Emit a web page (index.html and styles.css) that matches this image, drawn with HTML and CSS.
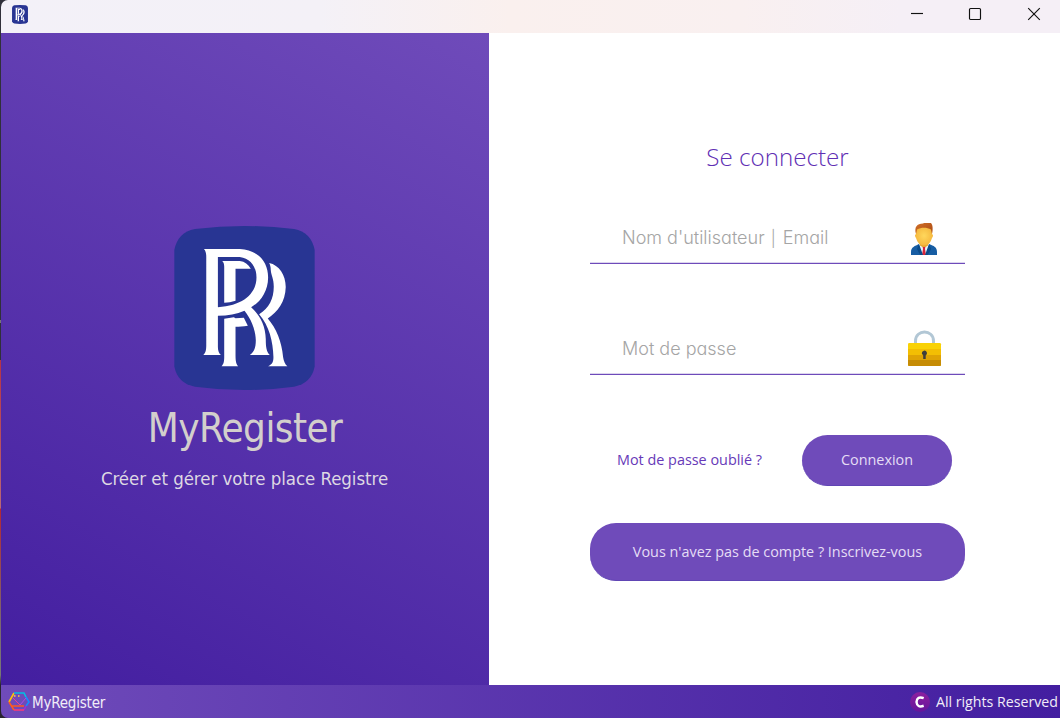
FILE: index.html
```html
<!DOCTYPE html>
<html lang="fr">
<head>
<meta charset="utf-8">
<title>MyRegister</title>
<link rel="stylesheet" href="styles.css">
</head>
<body>
<svg class="defs" aria-hidden="true">
  <symbol id="logo" viewBox="42 33 424 491" preserveAspectRatio="none">
    <path fill="#283593" d="M105 42Q254 24 403 42Q455 52 465 105V454Q455 505 403 514Q254 534 105 514Q53 505 43 454V105Q53 52 105 42Z"/>
    <g fill="#fff">
      <path fill-rule="evenodd" d="M132 102H240C295 105 325 140 325 187C325 230 300 262 274 276C300 300 317 330 318 372C318 395 320 410 330 419H270C284 410 288 395 288 375C287 340 272 310 254 287C230 297 205 302 174 302V395C174 408 178 414 183 419H130C137 413 139 405 139 390V125C139 115 137 107 132 102ZM174 126V276C250 272 290 235 290 187C290 155 272 130 240 126Z"/>
      <path d="M187 138H240C255 140 265 148 273 161H227V257C215 261 205 262 193 263V155C193 147 191 142 187 138Z"/>
      <path d="M193 311L222 306L227 309L252 308L264 332C250 334 238 335 227 335V420C227 438 229 447 235 453H185C191 446 193 440 193 425Z"/>
      <path d="M328 144C358 150 378 180 378 216C377 260 354 290 324 310C350 340 366 380 370 425C372 438 376 447 383 453H325C338 446 341 440 341 425C340 380 328 330 298 297C328 280 342 250 342 215C342 190 334 182 333 165C333 155 331 149 328 144Z"/>
    </g>
  </symbol>
</svg>
<div class="window">
  <header class="titlebar">
    <svg class="app-icon"><use href="#logo"/></svg>
    <div class="controls">
      <svg viewBox="0 0 14 14"><path d="M1 6.5H13"/></svg>
      <svg viewBox="0 0 14 14"><rect x="1.5" y="1.5" width="11" height="11" rx="1"/></svg>
      <svg viewBox="0 0 14 14"><path d="M1.2 1.2L12.8 12.8M12.8 1.2L1.2 12.8"/></svg>
    </div>
  </header>
  <main class="content">
    <section class="brand">
      <svg class="logo"><use href="#logo"/></svg>
      <h1>MyRegister</h1>
      <p>Créer et gérer votre place Registre</p>
    </section>
    <form class="login">
      <h2>Se connecter</h2>
      <div class="field">
        <span class="user-label">Nom d'utilisateur <span class="bar">|</span> Email</span>
        <svg class="user-icon" viewBox="0 0 28 34">
          <defs>
            <linearGradient id="hair" x2="1" y2="1"><stop stop-color="#d17028"/><stop offset="1" stop-color="#a94812"/></linearGradient>
            <radialGradient id="face"><stop stop-color="#ffd75c"/><stop offset="1" stop-color="#f5b83e"/></radialGradient>
          </defs>
          <path fill="#175da3" d="M1 32V29C1 24 5 23 9 21H19C24 23 27 24 27 29V32Z"/>
          <path fill="#e8f4fb" d="M9 21H19L18 32H10Z"/>
          <path fill="#e8a530" d="M10 18H18V22.5L14 25L10 22.5Z"/>
          <path fill="#d72439" d="M12.7 24H15.3L15 26L16 32H12L13 26Z"/>
          <path fill="#0b4b89" d="M9 21L13 32H10L7 26ZM19 21L15 32H18L21 26Z"/>
          <path fill="url(#face)" d="M6 6Q14 0 22 6V11Q24 12 22 15Q20 22.5 14 22.5Q8 22.5 6 15Q4 12 6 11Z"/>
          <path fill="url(#hair)" d="M6 11C4 4 7 .5 13 .5L14 0H21C23 2 23 7 22 11L21 6.5C17 4 11 4 7 6.5Z"/>
        </svg>
      </div>
      <div class="field field-password">
        <span class="password-label">Mot de passe</span>
        <svg class="lock-icon" viewBox="0 0 34 36">
          <path d="M7.5 14V11C7.5-1 25.5-1 25.5 11V14" fill="none" stroke="#b2c7d5" stroke-width="3"/>
          <rect x="0" y="13" width="33" height="23" rx="1.2" fill="#f9d206"/>
          <path fill="#f3be03" d="M0 19H33V25H0Z"/><path fill="#dfa304" d="M0 25H33V30H0Z"/>
          <path fill="#c68c05" d="M0 30H33V35Q33 36 32 36H1Q0 36 0 35Z"/>
          <path fill="#403e3c" d="M13.8 23.4A2.6 2.6 0 1 1 17.7 25.5V29H15.2V25.5Z"/>
        </svg>
      </div>
      <div class="actions">
        <a class="forgot">Mot de passe oublié ?</a>
        <button type="button" class="connect"><span>Connexion</span></button>
      </div>
      <button type="button" class="register"><span>Vous n'avez pas de compte ? Inscrivez-vous</span></button>
    </form>
  </main>
  <footer class="statusbar">
    <div class="status-brand">
      <svg class="hex-icon" viewBox="0 0 22 22" fill="none" stroke-width="1.6">
        <path stroke="#ffc107" d="M1 11L6 2"/><path stroke="#00bfe5" d="M6 2H16L18 6"/>
        <path stroke="#168cff" d="M18 6L21 11L18 15"/><path stroke="#a52bd4" d="M18 15L16 19"/>
        <path stroke="#ff3979" d="M16 19H6"/><path stroke="#ff5a1f" d="M6 19L1 11M3 15H16"/>
        <path stroke="#ef3e91" stroke-width="1" d="M5 7L12 14"/><path stroke="#b04be0" stroke-width="1" d="M12 14L18 7"/>
        <path stroke="#ffd043" stroke-dasharray="1.5 2.5" d="M6 5H14"/>
      </svg>
      <span>MyRegister</span>
    </div>
    <div class="rights">
      <svg class="copyright" viewBox="0 0 20 20"><defs><linearGradient id="badge" x2="0" y2="1"><stop stop-color="#8d209f"/><stop offset="1" stop-color="#65149a"/></linearGradient></defs><circle cx="10" cy="10" r="10" fill="url(#badge)"/><path d="M13.7 6.2Q7.1 3.8 6.5 10Q7.1 16.1 13.7 13.8" fill="none" stroke="#fff" stroke-width="2.5"/></svg>
      <span>All rights Reserved</span>
    </div>
  </footer>
</div>
</body>
</html>
```
FILE: styles.css
```css
* { box-sizing: border-box; }
body {
  margin: 0;
  height: 718px;
  overflow: hidden;
  padding-left: 1px;
  background: linear-gradient(#30303a 0 320px, #777 320px 323px, #30303a 323px 360px, #b63345 360px, #b96776 508px, #b32834 509px, #7c6670 620px, #777 675px, #28242f 685px);
  font-family: "Open Sans", "Noto Sans", sans-serif;
}
.defs { display: none; }
.window {
  width: 1059px;
  height: 718px;
  display: flex;
  flex-direction: column;
  overflow: hidden;
  border-radius: 7px 0 0 7px;
}
.titlebar {
  height: 33px;
  flex: none;
  display: flex;
  justify-content: space-between;
  padding: 5px 19px 0 11px;
  background: linear-gradient(90deg, #f3f1f8 0%, #f4f1f7 30%, #faf0ee 48%, #f9f0f0 70%, #f5eff6 85%, #f5eff6);
}
.app-icon { width: 16px; height: 19px; }
.controls { display: flex; gap: 44px; padding-top: 2px; }
.controls svg { width: 14px; height: 14px; fill: none; stroke: #111; stroke-width: 1.15; }
.controls svg:nth-child(2) { margin-right: 1px; }
.content { height: 652px; flex: none; display: flex; }
.brand {
  width: 488px;
  display: flex;
  flex-direction: column;
  align-items: center;
  padding: 193px 1px 0 0;
  background: linear-gradient(28deg, #431ea0, #6f4bba);
}
.logo { width: 141px; height: 164px; }
h1, h2, p { margin: 0; font-weight: 400; white-space: nowrap; }
h1 {
  margin-top: 14px;
  padding-left: 1px;
  font: 40px/48px "DejaVu Sans Condensed", sans-serif;
  letter-spacing: -0.6px;
  color: #d3cfcc;
}
p {
  margin-top: 15px;
  font: 18.5px/24px "DejaVu Sans Condensed", sans-serif;
  letter-spacing: -0.05px;
  color: #ded8e3;
}
.login {
  flex: 1;
  display: flex;
  flex-direction: column;
  align-items: center;
  padding: 106px 0 0 6px;
  background: #fff;
}
h2 { font: 300 24.2px/36px "Open Sans", sans-serif; color: #5f2fb4; }
.field {
  width: 375px;
  height: 75px;
  margin-top: 14px;
  padding: 34px 27px 0 32px;
  display: flex;
  align-items: flex-start;
  justify-content: space-between;
  border-bottom: 1px solid #6e4bba;
  box-shadow: inset 0 -1px #dcd5ee;
  font: 300 18px/30px Inter, sans-serif;
  font-feature-settings: "cv11" 1;
  color: #a5a5a5;
}
.bar { margin: 0 2px 0 1px; font-size: 16px; }
.user-icon { width: 28px; height: 34px; }
.lock-icon { width: 34px; height: 36px; margin: -4px -4px 0 0; }
.field-password { margin-top: 36px; }
.actions {
  width: 375px;
  margin-top: 60px;
  padding: 0 13px 0 27px;
  display: flex;
  justify-content: space-between;
  align-items: center;
}
.forgot { padding-bottom: 2px; font-size: 14.4px; color: #6739b8; }
button {
  display: block;
  border: 0;
  border-bottom: 1px solid #6045b4;
  border-radius: 26px;
  background: #6f4bba;
  color: #e5ddf5;
  font: 14.4px "Open Sans", sans-serif;
  white-space: nowrap;
}
.connect { width: 150px; height: 51px; padding-bottom: 2px; }
.register { width: 375px; height: 58px; margin-top: 37px; }
.statusbar {
  height: 33px;
  flex: none;
  display: flex;
  justify-content: space-between;
  align-items: center;
  padding: 1px 2px 0 7px;
  background: linear-gradient(90deg, #6f4bba, #431ea0);
  color: #f1edf8;
}
.status-brand, .rights { display: flex; align-items: center; white-space: nowrap; }
.status-brand { gap: 2px; font: 15px "DejaVu Sans Condensed", sans-serif; letter-spacing: -0.2px; }
.status-brand span { padding-top: 1px; }
.hex-icon { width: 22px; height: 22px; }
.rights { gap: 6px; font-size: 14.2px; }
.rights span { padding-bottom: 1px; }
.copyright { width: 20px; height: 20px; }
```
